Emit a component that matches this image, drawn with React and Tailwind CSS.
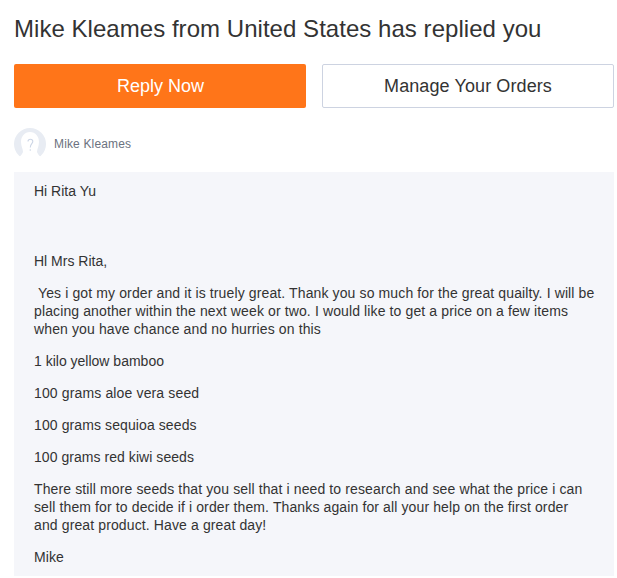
import React from 'react'

const Avatar = () => (
  <svg width="32" height="32" viewBox="0 0 32 32" className="shrink-0">
    <circle cx="16" cy="16" r="16" fill="#e8ecf3" />
    <path d="M16 4 C21.5 4 25 8.5 25 14 C25 18 23 21 23 24 C24 27 27 29 27 29 C24 31 21 33 16 33 C11 33 8 31 5 29 C5 29 8 27 9 24 C9 21 7 18 7 14 C7 8.5 10.5 4 16 4 Z" fill="#ffffff" />
    <path d="M14 13.5 C14 10.5 18.8 10.5 18.8 13.5 C18.8 15.8 16.3 15.8 16.3 19.5" fill="none" stroke="#cdd6e6" strokeWidth="1.1" />
    <circle cx="16.3" cy="22" r="0.8" fill="#cdd6e6" />
  </svg>
)

const App = () => {
  return (
    <div className="w-[617px] h-[578px] overflow-hidden bg-white text-[#333333] font-['Liberation_Sans',Arial,sans-serif]">
      <div className="pl-[14px]">
        <h1 className="pt-[14px] text-[24px] leading-[30px] font-normal tracking-[0.04px] text-[#333333]">
          Mike Kleames from United States has replied you
        </h1>
        <div className="mt-[20px] flex gap-4">
          <a className="flex h-[44px] w-[292px] items-center justify-center rounded-[2px] bg-[#ff7519] pl-[1px] text-[18px] text-white">
            Reply Now
          </a>
          <a className="flex h-[44px] w-[292px] items-center justify-center rounded-[2px] border border-[#cdd3e1] bg-white text-[18px] tracking-[0.1px] text-[#333333]">
            Manage Your Orders
          </a>
        </div>
        <div className="mt-[20px] flex items-center gap-2">
          <Avatar />
          <span className="text-[12px] tracking-[0.15px] text-[#6b7280]">Mike Kleames</span>
        </div>
        <div className="mt-[12px] h-[404px] w-[600px] bg-[#f5f6fa] pl-5 pr-[16px] pt-[10px] text-[14px] leading-[18px] tracking-[0.1px]">
          <p className="tracking-normal">Hi Rita Yu</p>
          <p className="mt-[52px] tracking-normal">Hl Mrs Rita,</p>
          <p className="mt-[14px] tracking-[0.12px] pr-[1px]">
            &nbsp;Yes i got my order and it is truely great. Thank you so much for the great quailty. I will be placing another within the next week or two. I would like to get a price on a few items when you have chance and no hurries on this
          </p>
          <p className="mt-[14px] tracking-normal">1 kilo yellow bamboo</p>
          <p className="mt-[14px] tracking-[0.14px]">100 grams aloe vera seed</p>
          <p className="mt-[14px]">100 grams sequioa seeds</p>
          <p className="mt-[14px] tracking-[0.05px]">100 grams red kiwi seeds</p>
          <p className="mt-[14px] tracking-[0.12px] pr-[4px]">
            There still more seeds that you sell that i need to research and see what the price i can sell them for to decide if i order them. Thanks again for all your help on the first order and great product. Have a great day!
          </p>
          <p className="mt-[14px]">Mike</p>
        </div>
      </div>
    </div>
  )
}

export default App
